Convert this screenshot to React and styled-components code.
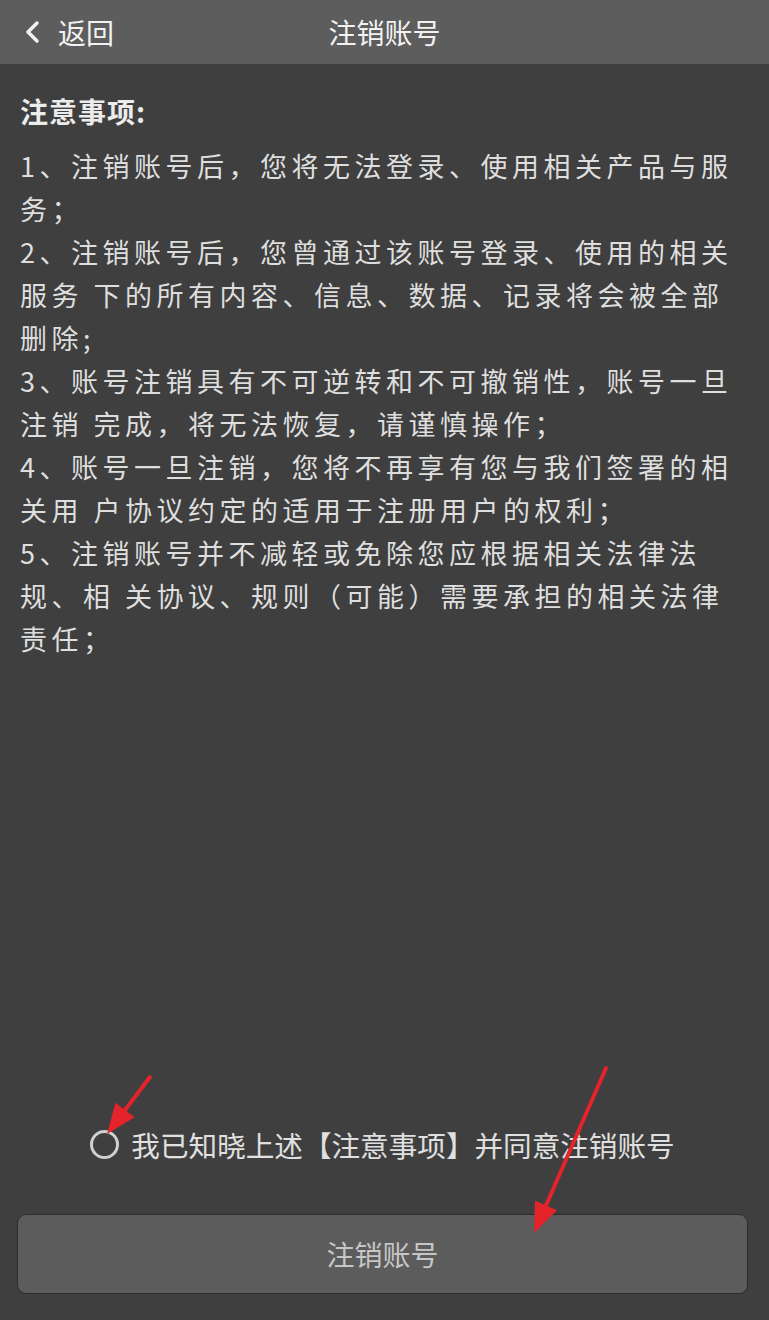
import React from 'react'
import styled, { createGlobalStyle } from 'styled-components'

const GlobalStyle = createGlobalStyle`
  html, body {
    margin: 0;
    padding: 0;
    background: #3f3f3f;
  }
  body {
    font-family: "Noto Sans CJK SC", "Noto Sans", sans-serif;
  }
`

const Page = styled.div`
  position: relative;
  display: flex;
  flex-direction: column;
  min-height: 1320px;
  background: #3f3f3f;
  color: #dedede;
`

const Header = styled.header`
  position: relative;
  display: flex;
  align-items: center;
  height: 64px;
  background: #5d5d5d;
  color: #f2f2f2;
  font-size: 28px;
`

const Back = styled.div`
  display: flex;
  align-items: center;
  gap: 16px;
  padding-left: 24px;
  z-index: 1;
`

const Title = styled.div`
  position: absolute;
  left: 0;
  right: 0;
  text-align: center;
`

const Content = styled.main`
  flex: 1;
  padding: 26px 0 0 20px;
`

const Heading = styled.div`
  font-size: 28px;
  font-weight: 700;
  line-height: 43px;
  letter-spacing: 1px;
  margin-bottom: 11px;
  color: #ececec;
`

const Notice = styled.div`
  font-size: 27px;
  line-height: 43px;
  letter-spacing: 4.5px;
  white-space: nowrap;
`

const Line = styled.div``

const Footer = styled.footer`
  display: flex;
  flex-direction: column;
  padding: 0 21px 26px 17px;
`

const Agree = styled.label`
  display: flex;
  align-items: center;
  justify-content: center;
  gap: 12px;
  height: 43px;
  margin-bottom: 48px;
  font-size: 28.6px;
  color: #e0e0e0;
`

const Radio = styled.span`
  box-sizing: border-box;
  width: 29px;
  height: 29px;
  border-radius: 50%;
  border: 3px solid #d0d0d0;
`

const Button = styled.button`
  height: 80px;
  border: 1px solid #2c2c2c;
  border-radius: 9px;
  background: #5c5c5c;
  color: #c6c6c6;
  font-family: inherit;
  font-size: 28px;
`

const Overlay = styled.svg`
  position: absolute;
  left: 0;
  top: 0;
  width: 769px;
  height: 1320px;
  pointer-events: none;
`

const lines = [
  '1、注销账号后，您将无法登录、使用相关产品与服',
  '务；',
  '2、注销账号后，您曾通过该账号登录、使用的相关',
  '服务 下的所有内容、信息、数据、记录将会被全部',
  '删除;',
  '3、账号注销具有不可逆转和不可撤销性，账号一旦',
  '注销 完成，将无法恢复，请谨慎操作；',
  '4、账号一旦注销，您将不再享有您与我们签署的相',
  '关用 户协议约定的适用于注册用户的权利；',
  '5、注销账号并不减轻或免除您应根据相关法律法',
  '规、相 关协议、规则（可能）需要承担的相关法律',
  '责任；',
]

const Arrow = ({ x1, y1, x2, y2 }) => {
  const a = Math.atan2(y2 - y1, x2 - x1)
  const len = 30
  const w = 12
  const bx = x2 - len * Math.cos(a)
  const by = y2 - len * Math.sin(a)
  const px = -Math.sin(a) * w
  const py = Math.cos(a) * w
  return (
    <g>
      <line x1={x1} y1={y1} x2={bx} y2={by} stroke="#e3242b" strokeWidth="4" strokeLinecap="round" />
      <polygon points={`${x2},${y2} ${bx + px},${by + py} ${bx - px},${by - py}`} fill="#e3242b" />
    </g>
  )
}

export default function App() {
  return (
    <Page>
      <GlobalStyle />
      <Header>
        <Back>
          <svg width="18" height="24" viewBox="0 0 18 24">
            <path d="M13 3 L4 12 L13 21" fill="none" stroke="#f2f2f2" strokeWidth="3.5" strokeLinecap="round" strokeLinejoin="round" />
          </svg>
          <span>返回</span>
        </Back>
        <Title>注销账号</Title>
      </Header>
      <Content>
        <Heading>注意事项:</Heading>
        <Notice>
          {lines.map((l, i) => (
            <Line key={i}>{l}</Line>
          ))}
        </Notice>
      </Content>
      <Footer>
        <Agree>
          <Radio />
          <span>我已知晓上述【注意事项】并同意注销账号</span>
        </Agree>
        <Button>注销账号</Button>
      </Footer>
      <Overlay viewBox="0 0 769 1320">
        <Arrow x1={150} y1={1077} x2={107} y2={1134} />
        <Arrow x1={606} y1={1068} x2={534} y2={1233} />
      </Overlay>
    </Page>
  )
}
